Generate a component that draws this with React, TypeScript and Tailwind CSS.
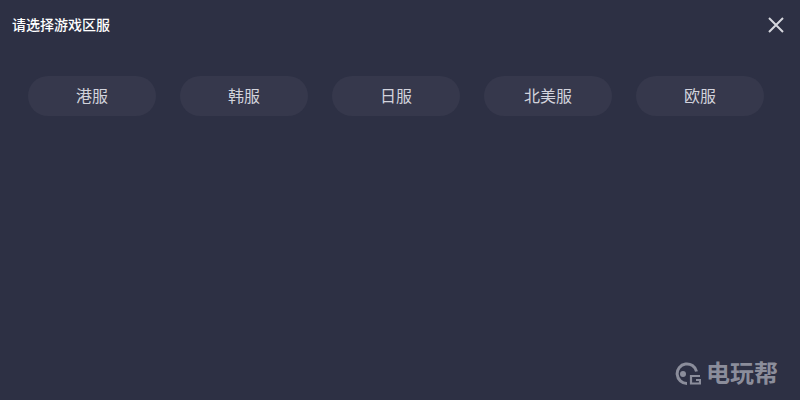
const servers = ['港服', '韩服', '日服', '北美服', '欧服']

const cjk = "font-['Liberation_Sans','Noto_Sans_CJK_SC',sans-serif]"

export default function App() {
  return (
    <div className={`relative h-[400px] w-[800px] overflow-hidden bg-[#2d3044] ${cjk}`}>
      <div className="flex h-[50px] items-center justify-between pl-3 pr-4">
        <p className="text-sm font-medium leading-5 text-white">请选择游戏区服</p>
        <button aria-label="关闭" className="text-[#d5d6dd]">
          <svg width="16" height="16" viewBox="0 0 16 16" fill="none" stroke="currentColor" strokeWidth="2">
            <path d="M1 1l14 14M15 1L1 15" />
          </svg>
        </button>
      </div>

      <div className="mt-[26px] flex gap-6 pl-7">
        {servers.map(s => (
          <button key={s} className="h-10 w-32 rounded-[20px] bg-[#36384c] pt-0.5 text-base text-[#d2d3dc]">
            {s}
          </button>
        ))}
      </div>

      {/* watermark */}
      <div className="absolute bottom-[12px] right-[22px] flex items-center gap-[5px] text-[#8b8d9b]">
        <svg width="28" height="24" viewBox="0 0 28 24" fill="none">
          <path d="M14 21.5A9.8 9.8 0 1 1 23.5 9.5" stroke="currentColor" strokeWidth="3" />
          <circle cx="10" cy="12" r="3" fill="currentColor" />
          <path d="M27 14h-9v7.5h9V18h-4" stroke="currentColor" strokeWidth="2.2" />
        </svg>
        <span className="text-[24px] font-bold leading-7">电玩帮</span>
      </div>
    </div>
  )
}
